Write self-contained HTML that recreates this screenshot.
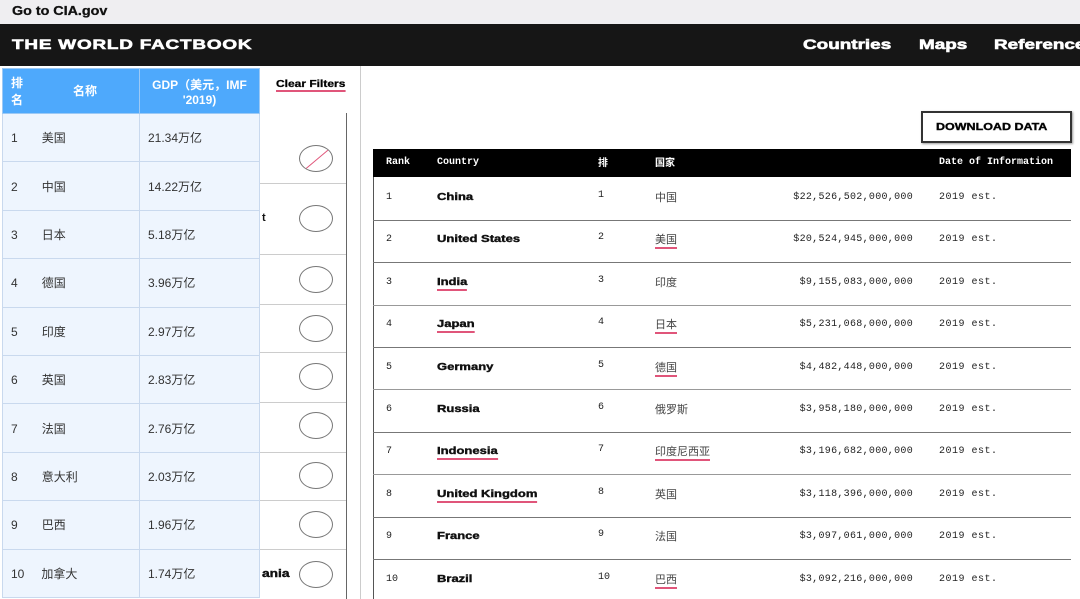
<!DOCTYPE html>
<html><head><meta charset="utf-8"><style>
*{margin:0;padding:0;box-sizing:border-box}
body{width:1080px;height:599px;overflow:hidden;background:#fff;font-family:"Liberation Sans","Noto Sans CJK SC",sans-serif;position:relative}
.a{position:absolute}
.w{display:inline-block;transform:scaleX(1.35);transform-origin:left center;white-space:nowrap;-webkit-text-stroke:0.6px currentColor}
.top{left:0;top:0;width:1080px;height:24px;background:#efeef1;font-weight:bold;font-size:13px;padding:3px 0 0 12px;color:#111}
.nav{left:0;top:24px;width:1080px;height:42px;background:#161616;color:#fff;font-weight:900}
.cn{font-family:"Liberation Sans","Noto Sans CJK SC",sans-serif}
.mono{font-family:"Liberation Mono","DejaVu Sans Mono",monospace;font-size:10px;color:#222}
.circ{width:34px;height:27px;border:1px solid #777;border-radius:50%;left:299px}
.hl{height:1px;background:#ccc}
.rl{left:373px;width:698px;height:1px;background:#777}
.bold{font-weight:900;font-size:10px;color:#111}
.u{border-bottom:2px solid #e0557a;padding-bottom:1px;-webkit-text-stroke:0}
.bold .u,.bold span span{-webkit-text-stroke:inherit}
table{border-collapse:collapse}
.lt{left:2px;top:68px;width:258px;font-size:12px;color:#333}
.lt td{border:1px solid #c9d9ee;background:#eef5fe;height:48.4px;padding-left:8px}
.lt th{background:#4ea9fc;color:#fff;border:1px solid #9cc9f5;height:45px;font-size:12px;font-weight:bold}
</style></head><body>
<div class="a top"><span class="w" style="transform:scaleX(1.1);-webkit-text-stroke:0.3px #111">Go to CIA.gov</span></div>
<div class="a nav">
<div class="a" style="left:12px;top:12px;font-size:14px;letter-spacing:.6px"><span class="w">THE WORLD FACTBOOK</span></div>
<div class="a" style="left:803px;top:12px;font-size:14px"><span class="w">Countries</span></div>
<div class="a" style="left:919px;top:12px;font-size:14px"><span class="w">Maps</span></div>
<div class="a" style="left:994px;top:12px;font-size:14px"><span class="w">References</span></div>
</div>

<div class="a" style="left:276px;top:79px;font-size:10px;font-weight:900"><span class="w" style="transform:scaleX(1.2);border-bottom:2px solid #e0557a;-webkit-text-stroke:0.3px #111">Clear Filters</span></div>
<div class="a" style="left:346px;top:113px;width:1px;height:486px;background:#666"></div>
<div class="a" style="left:360px;top:66px;width:1px;height:533px;background:#ccc"></div>
<div class="a hl" style="left:260px;top:183px;width:86px"></div>
<div class="a hl" style="left:260px;top:254px;width:86px"></div>
<div class="a hl" style="left:260px;top:304px;width:86px"></div>
<div class="a hl" style="left:260px;top:352px;width:86px"></div>
<div class="a hl" style="left:260px;top:402px;width:86px"></div>
<div class="a hl" style="left:260px;top:452px;width:86px"></div>
<div class="a hl" style="left:260px;top:500px;width:86px"></div>
<div class="a hl" style="left:260px;top:549px;width:86px"></div>
<div class="a circ" style="top:145px;overflow:hidden"><div class="a" style="left:-2px;top:12px;width:40px;height:1px;background:#e0557a;transform:rotate(-40deg)"></div></div>
<div class="a circ" style="top:205px"></div>
<div class="a circ" style="top:266px"></div>
<div class="a circ" style="top:315px"></div>
<div class="a circ" style="top:363px"></div>
<div class="a circ" style="top:412px"></div>
<div class="a circ" style="top:462px"></div>
<div class="a circ" style="top:511px"></div>
<div class="a circ" style="top:561px"></div>
<div class="a bold" style="left:262px;top:212px;font-size:11px">t</div>
<div class="a bold" style="left:262px;top:568px;font-size:11px"><span class="w" style="transform:scaleX(1.25);-webkit-text-stroke:0.4px #111">ania</span></div>

<table class="a lt">
<tr><th style="width:137px;text-align:left;padding-left:8px;position:relative">排<br>名<span style="position:absolute;left:70px;top:13px">名称</span></th><th>GDP（美元，IMF<br>'2019)</th></tr>
<tr><td>1<span style="margin-left:24px">美国</span></td><td>21.34万亿</td></tr>
<tr><td>2<span style="margin-left:24px">中国</span></td><td>14.22万亿</td></tr>
<tr><td>3<span style="margin-left:24px">日本</span></td><td>5.18万亿</td></tr>
<tr><td>4<span style="margin-left:24px">德国</span></td><td>3.96万亿</td></tr>
<tr><td>5<span style="margin-left:24px">印度</span></td><td>2.97万亿</td></tr>
<tr><td>6<span style="margin-left:24px">英国</span></td><td>2.83万亿</td></tr>
<tr><td>7<span style="margin-left:24px">法国</span></td><td>2.76万亿</td></tr>
<tr><td>8<span style="margin-left:24px">意大利</span></td><td>2.03万亿</td></tr>
<tr><td>9<span style="margin-left:24px">巴西</span></td><td>1.96万亿</td></tr>
<tr><td>10<span style="margin-left:17px">加拿大</span></td><td>1.74万亿</td></tr>
</table>

<div class="a" style="left:921px;top:111px;width:151px;height:32px;border:2px solid #333;box-shadow:1px 1px 2px #999;font-size:10px;font-weight:900;line-height:28px"><span class="w" style="position:absolute;left:13px;top:1px;transform:scaleX(1.25);-webkit-text-stroke:0.4px #111">DOWNLOAD DATA</span></div>
<div class="a" style="left:373px;top:149px;width:698px;height:28px;background:#000;color:#fff;font-family:'Liberation Mono',monospace;font-size:10px;font-weight:bold">
<span class="a" style="left:13px;top:8px">Rank</span><span class="a" style="left:64px;top:8px">Country</span>
<span class="a cn" style="left:225px;top:5px;font-size:10px">排</span><span class="a cn" style="left:282px;top:5px;font-size:10px">国家</span>
<span class="a" style="left:566px;top:8px">Date of Information</span></div>
<div class="a" style="left:373px;top:177px;width:1px;height:422px;background:#555"></div>
<div class="a rl" style="top:220px"></div><div class="a rl" style="top:262px"></div><div class="a rl" style="top:305px;background:#999"></div>
<div class="a rl" style="top:347px"></div><div class="a rl" style="top:389px;background:#999"></div><div class="a rl" style="top:432px"></div>
<div class="a rl" style="top:474px;background:#999"></div><div class="a rl" style="top:517px"></div><div class="a rl" style="top:559px"></div>

<div id="rows"></div>
<script>
var d=[["China","中国","$22,526,502,000,000",0],["United States","美国","$20,524,945,000,000",2],["India","印度","$9,155,083,000,000",1],["Japan","日本","$5,231,068,000,000",3],["Germany","德国","$4,482,448,000,000",2],["Russia","俄罗斯","$3,958,180,000,000",0],["Indonesia","印度尼西亚","$3,196,682,000,000",3],["United Kingdom","英国","$3,118,396,000,000",1],["France","法国","$3,097,061,000,000",0],["Brazil","巴西","$3,092,216,000,000",2]];
var h="";
for(var i=0;i<10;i++){var y=177+i*42.4;var r=d[i];
h+='<div class="a mono" style="left:386px;top:'+(y+15)+'px">'+(i+1)+'</div>';
h+='<div class="a bold" style="left:437px;top:'+(y+15)+'px"><span class="w" style="transform:scaleX(1.3);-webkit-text-stroke:0.4px #111"><span class="'+(r[3]&1?'u':'')+'">'+r[0]+'</span></span></div>';
h+='<div class="a mono" style="left:598px;top:'+(y+13)+'px">'+(i+1)+'</div>';
h+='<div class="a cn" style="left:655px;top:'+(y+12)+'px;font-size:11px;color:#444"><span class="'+(r[3]&2?'u':'')+'">'+r[1]+'</span></div>';
h+='<div class="a mono" style="left:760px;width:153px;text-align:right;top:'+(y+15)+'px;letter-spacing:.3px">'+r[2]+'</div>';
h+='<div class="a mono" style="left:939px;top:'+(y+15)+'px;letter-spacing:.5px">2019 est.</div>';}
document.getElementById("rows").innerHTML=h;
</script>
</body></html>
